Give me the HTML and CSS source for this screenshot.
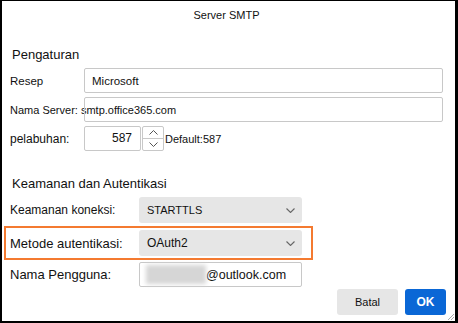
FILE: index.html
```html
<!DOCTYPE html>
<html lang="id">

<head>
    <meta charset="UTF-8">
    <meta name="viewport" content="width=device-width, initial-scale=1.0">
    <title>Server SMTP</title>
    <link rel="stylesheet" href="styles.css">
</head>

<body>
    <div class="dialog">
        <div class="title">Server SMTP</div>

        <h2 class="heading">Pengaturan</h2>
        <div class="row first">
            <label class="lbl-a">Resep</label>
            <div class="field">Microsoft</div>
        </div>
        <div class="row">
            <label class="lbl-a server">Nama Server: smtp.office365.com</label>
            <div class="field"></div>
        </div>
        <div class="row">
            <label class="lbl-a port">pelabuhan:</label>
            <div class="spin-input">587</div>
            <div class="spin-btns">
                <span class="spin-up">
                    <svg width="9" height="5" viewBox="0 0 9 5"><polyline points="0.5,4.5 4.5,0.5 8.5,4.5" fill="none" stroke="#555" stroke-width="1"/></svg>
                </span>
                <span class="spin-down">
                    <svg width="9" height="5" viewBox="0 0 9 5"><polyline points="0.5,0.5 4.5,4.5 8.5,0.5" fill="none" stroke="#555" stroke-width="1"/></svg>
                </span>
            </div>
            <span class="default">Default:587</span>
        </div>

        <h2 class="heading second">Keamanan dan Autentikasi</h2>
        <div class="row sel-row">
            <label class="lbl-b small">Keamanan koneksi:</label>
            <div class="select small-text">
                <span>STARTTLS</span>
                <svg width="9" height="5" viewBox="0 0 9 5"><polyline points="0.5,0.5 4.5,4.5 8.5,0.5" fill="none" stroke="#666" stroke-width="1.1"/></svg>
            </div>
        </div>
        <div class="highlight">
            <div class="row inner">
                <label class="lbl-b">Metode autentikasi:</label>
                <div class="select">
                    <span>OAuth2</span>
                    <svg width="9" height="5" viewBox="0 0 9 5"><polyline points="0.5,0.5 4.5,4.5 8.5,0.5" fill="none" stroke="#666" stroke-width="1.1"/></svg>
                </div>
            </div>
        </div>
        <div class="row user-row">
            <label class="lbl-b">Nama Pengguna:</label>
            <div class="field user">
                <span class="blurred"></span>@outlook.com
            </div>
        </div>

        <div class="buttons">
            <button class="btn">Batal</button>
            <button class="btn primary">OK</button>
        </div>

        <svg class="grip" width="8" height="8" viewBox="0 0 8 8">
            <line x1="7" y1="1" x2="1" y2="7" stroke="#aaa" stroke-width="1"/>
            <line x1="7" y1="4" x2="4" y2="7" stroke="#aaa" stroke-width="1"/>
        </svg>
    </div>
</body>
</html>
```

FILE: styles.css
```css
* {
    box-sizing: border-box;
}
body {
    margin: 0;
    padding: 0;
    background: #fff;
    font-family: "Liberation Sans", Arial, sans-serif;
    color: #111;
}
.dialog {
    position: relative;
    width: 458px;
    height: 323px;
    border-style: solid;
    border-color: #000;
    border-width: 1px 3px 2px 2px;
    background: #fff;
}
.title {
    height: 28px;
    line-height: 28px;
    text-align: center;
    font-size: 11px;
    padding-right: 4px;
}
.heading {
    margin: 18px 0 0 10px;
    font-size: 13px;
    line-height: 16px;
    font-weight: normal;
}
.heading.second {
    margin-top: 25px;
}
.row {
    display: flex;
    align-items: center;
    height: 25px;
    padding-left: 8px;
    margin-top: 4px;
}
.row.first {
    margin-top: 5px;
}
.lbl-a {
    flex: 0 0 74px;
    min-width: 0;
    font-size: 11.5px;
    white-space: nowrap;
}
.lbl-a.server {
    font-size: 11px;
}
.lbl-a.port {
    font-size: 12px;
}
.field {
    display: flex;
    align-items: center;
    width: 359px;
    height: 25px;
    padding-left: 7px;
    border: 1px solid #c8c8c8;
    border-radius: 2px;
    background: transparent;
    font-size: 11.5px;
}
.spin-input {
    width: 57px;
    height: 25px;
    border: 1px solid #c8c8c8;
    border-radius: 2px;
    text-align: right;
    padding-right: 8px;
    line-height: 23px;
    font-size: 12px;
}
.spin-btns {
    display: flex;
    flex-direction: column;
    width: 22px;
    height: 25px;
    margin-left: 1px;
    border: 1px solid #c8c8c8;
    border-radius: 2px;
}
.spin-btns span {
    flex: 1;
    display: flex;
    align-items: center;
    justify-content: center;
}
.spin-up {
    border-bottom: 1px solid #c8c8c8;
}
.default {
    margin-left: 1px;
    font-size: 11px;
}
.sel-row {
    height: 26px;
    margin-top: 5px;
}
.lbl-b {
    flex: 0 0 129px;
    min-width: 0;
    font-size: 13px;
    white-space: nowrap;
}
.lbl-b.small {
    font-size: 12px;
}
.select {
    display: flex;
    align-items: center;
    justify-content: space-between;
    width: 163px;
    height: 26px;
    padding: 0 7px 0 8px;
    background: #e6e6e6;
    border-radius: 3px;
    font-size: 12px;
}
.select.small-text {
    font-size: 11px;
}
.highlight {
    width: 309px;
    height: 34px;
    margin: 3px 0 0 2px;
    padding: 2px 0 2px 4px;
    border: 2px solid #f47a30;
}
.row.inner {
    height: 26px;
    margin-top: 0;
    padding-left: 0;
}
.user-row {
    margin-top: 2px;
}
.field.user {
    width: 163px;
    padding-left: 6px;
    font-size: 12.5px;
}
.blurred {
    display: inline-block;
    width: 60px;
    height: 19px;
    background: #d6d6d6;
    filter: blur(2px);
}
.buttons {
    display: flex;
    justify-content: flex-end;
    gap: 7px;
    margin-top: 2px;
    padding-right: 9px;
}
.btn {
    width: 61px;
    height: 26px;
    border: none;
    border-radius: 3px;
    background: #e6e6e6;
    color: #111;
    font-family: "Liberation Sans", Arial, sans-serif;
    font-size: 11px;
    padding: 0;
}
.btn.primary {
    width: 41px;
    background: #0a67d6;
    color: #fff;
    font-weight: bold;
    font-size: 12px;
}
.grip {
    position: absolute;
    right: 0;
    bottom: 0;
}
```
